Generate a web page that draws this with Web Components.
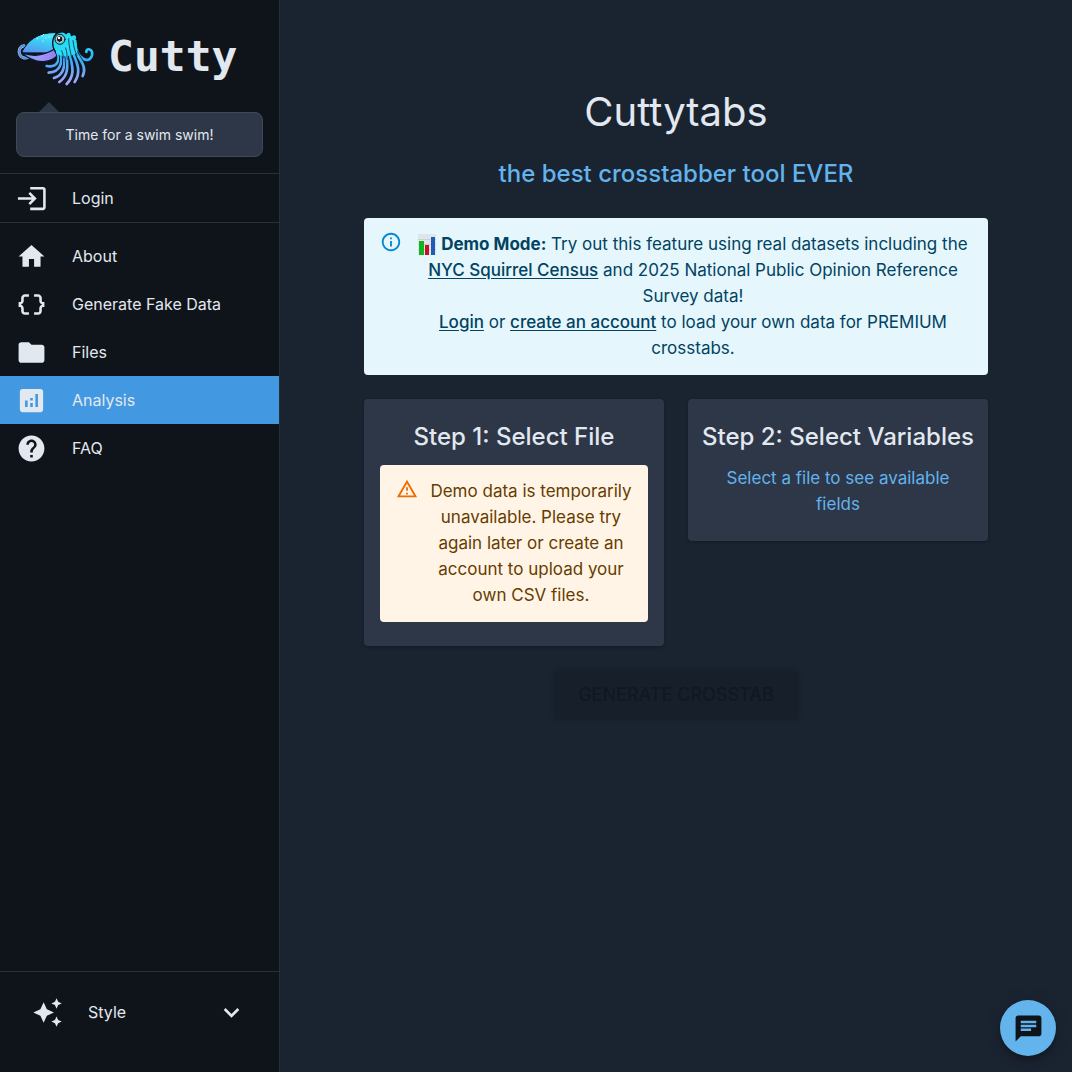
<!DOCTYPE html>
<html lang="en">
<head>
<meta charset="utf-8">
<meta name="viewport" content="width=device-width, initial-scale=1">
<title>Cuttytabs</title>
<style>
  html, body { margin: 0; }
  body { min-height: 100vh; background: #1a2330; color: #e2e8f0; font: 17px/26px Inter, "Liberation Sans", sans-serif; }
</style>
</head>
<body>
<cutty-shell>
  <cutty-brand slot="brand">Cutty</cutty-brand>
  <cutty-bubble slot="brand">Time for a swim swim!</cutty-bubble>

  <nav-item slot="account" icon="login" href="#login">Login</nav-item>

  <nav-item slot="nav" icon="home" href="#about">About</nav-item>
  <nav-item slot="nav" icon="braces" href="#generate">Generate Fake Data</nav-item>
  <nav-item slot="nav" icon="folder" href="#files">Files</nav-item>
  <nav-item slot="nav" icon="chart" href="#analysis" active>Analysis</nav-item>
  <nav-item slot="nav" icon="help" href="#faq">FAQ</nav-item>

  <style-toggle slot="footer">Style</style-toggle>

  <crosstab-page></crosstab-page>
  <chat-button slot="chat"></chat-button>
</cutty-shell>

<script>
const define = (name, html, setup) => {
  const template = document.createElement('template');
  template.innerHTML = '<style>:host,*{box-sizing:border-box}</style>' + html;
  customElements.define(name, class extends HTMLElement {
    constructor() {
      super();
      this.attachShadow({ mode: 'open' }).append(template.content.cloneNode(true));
    }
    connectedCallback() { if (setup) setup(this, this.shadowRoot); }
  });
};

const ICONS = {
  login: '<path d="M21 3.01H11v2h10v14H11v2h10c1.1 0 2-.9 2-2v-14c0-1.1-.9-2-2-2z"/><path d="M11 17l5-5-5-5-1.400 1.400L12.200 11H1.500v2h10.700l-2.600 2.600z"/>',
  home: '<path d="M10 20v-6h4v6h5v-8h3L12 3 2 12h3v8z"/>',
  braces: '<path d="M4 7v2c0 .55-.45 1-1 1H2v4h1c.55 0 1 .45 1 1v2c0 1.650 1.350 3 3 3h3v-2H7c-.55 0-1-.45-1-1v-2c0-1.300-.840-2.420-2-2.830v-.340C5.160 11.420 6 10.300 6 9V7c0-.55.45-1 1-1h3V4H7C5.350 4 4 5.350 4 7zm17 3c-.55 0-1-.45-1-1V7c0-1.650-1.350-3-3-3h-3v2h3c.55 0 1 .45 1 1v2c0 1.300.840 2.420 2 2.830v.340c-1.160.410-2 1.520-2 2.830v2c0 .55-.45 1-1 1h-3v2h3c1.650 0 3-1.350 3-3v-2c0-.55.45-1 1-1h1v-4h-1z"/>',
  folder: '<path d="M10 4H4c-1.100 0-1.990.900-1.990 2L2 18c0 1.100.900 2 2 2h16c1.100 0 2-.9 2-2V8c0-1.100-.9-2-2-2h-8l-2-2z"/>',
  chart: '<path d="M19 3H5c-1.100 0-2 .900-2 2v14c0 1.100.900 2 2 2h14c1.100 0 2-.9 2-2V5c0-1.100-.9-2-2-2zM9 17H7v-5h2v5zm4 0h-2v-3h2v3zm0-5h-2v-2h2v2zm4 5h-2V7h2v10z"/>',
  help: '<path d="M12 2C6.480 2 2 6.480 2 12s4.480 10 10 10 10-4.480 10-10S17.520 2 12 2zm1 17h-2v-2h2v2zm2.070-7.750-.9.920C13.450 12.900 13 13.500 13 15h-2v-.5c0-1.100.450-2.100 1.170-2.830l1.240-1.260c.370-.360.590-.860.590-1.410 0-1.100-.9-2-2-2s-2 .900-2 2H8c0-2.210 1.790-4 4-4s4 1.790 4 4c0 .880-.360 1.680-.930 2.250z"/>',
  sparkle: '<path d="m19 9 1.250-2.750L23 5l-2.750-1.250L19 1l-1.250 2.750L15 5l2.750 1.250L19 9zm-7.500.5L9 4 6.500 9.500 1 12l5.500 2.500L9 20l2.500-5.500L17 12l-5.500-2.500zM19 15l-1.250 2.750L15 19l2.750 1.250L19 23l1.250-2.750L23 19l-2.750-1.250L19 15z"/>',
  chevron: '<path d="M7.410 8.590 12 13.170l4.590-4.580L18 10l-6 6-6-6z"/>',
  info: '<path d="M11 7h2v2h-2zm0 4h2v6h-2zm1-9C6.480 2 2 6.480 2 12s4.480 10 10 10 10-4.480 10-10S17.520 2 12 2zm0 18c-4.410 0-8-3.590-8-8s3.590-8 8-8 8 3.590 8 8-3.590 8-8 8z"/>',
  warning: '<path d="M12 5.990 19.530 19H4.470L12 5.990M12 2 1 21h22L12 2zm1 14h-2v2h2v-2zm0-6h-2v4h2v-4z"/>',
  chat: '<path d="M20 2H4c-1.100 0-1.990.900-1.990 2L2 22l4-4h14c1.100 0 2-.9 2-2V4c0-1.100-.9-2-2-2zM6 9h12v2H6V9zm8 5H6v-2h8v2zm4-6H6V6h12v2z"/>',
};

define('app-icon', `
  <style>
    :host { display: block; flex: none; width: 31px; height: 31px; }
    svg { display: block; width: 100%; height: 100%; fill: currentColor; }
  </style>
  <svg viewBox="0 0 24 24" aria-hidden="true"></svg>
`, (el, root) => { root.querySelector('svg').innerHTML = ICONS[el.getAttribute('name')] || ''; });

define('cutty-shell', `
  <style>
    :host { display: grid; grid-template-columns: 280px 1fr; min-height: 100vh; }
    aside { display: flex; flex-direction: column; background: #0f141a; border-right: 1px solid #252d35; height: 100vh; position: sticky; top: 0; }
    header { padding: 16px; display: flex; flex-direction: column; gap: 16px; }
    section, nav, footer { border-top: 1px solid #2a3037; }
    nav { padding-top: 9px; flex: 1; }
    footer { padding: 16px 16px 36px; }
    main { min-width: 0; }
  </style>
  <aside>
    <header><slot name="brand"></slot></header>
    <section><slot name="account"></slot></section>
    <nav><slot name="nav"></slot></nav>
    <footer><slot name="footer"></slot></footer>
  </aside>
  <main><slot></slot></main>
  <slot name="chat"></slot>
`);

const ARMS = [
  'M182 62C188 112 226 128 234 100C238 80 216 76 217 90',
  'M178 74C190 108 222 130 206 162',
  'M171 78C184 115 206 145 182 180',
  'M129 88C140 112 132 138 98 132',
  'M138 88C148 120 140 150 104 152',
  'M147 86C156 125 154 158 120 168',
  'M164 82C172 125 188 155 158 186',
  'M156 84C160 125 168 158 136 180',
];

define('cutty-brand', `
  <style>
    :host { display: flex; align-items: center; gap: 10px; height: 80px; font: bold 43px/80px "DejaVu Sans Mono", monospace; }
    svg { display: block; flex: none; width: 82px; height: 66px; }
  </style>
  <svg viewBox="6 3 246 198" fill="none" stroke-linecap="round" stroke-linejoin="round" aria-hidden="true">
    <defs>
      <linearGradient id="mantle" gradientUnits="userSpaceOnUse" x1="80" y1="25" x2="66" y2="95"><stop offset="0" stop-color="#4ff0fa"/><stop offset=".5" stop-color="#3ec8f5"/><stop offset="1" stop-color="#5c95ee"/></linearGradient>
      <linearGradient id="belly" x1="0" y1="0" x2="1" y2="0"><stop offset="0" stop-color="#62aef0"/><stop offset=".5" stop-color="#a596fa"/><stop offset="1" stop-color="#8d7cec"/></linearGradient>
      <linearGradient id="arm" gradientUnits="userSpaceOnUse" x1="0" y1="60" x2="0" y2="188"><stop offset="0" stop-color="#22e0f5"/><stop offset=".45" stop-color="#3fa9ef"/><stop offset="1" stop-color="#b7a4f6"/></linearGradient>
    </defs>
    <path d="M30 71C16 74 12 88 18 99c6 11 17 11 26 6" stroke="#a9c4f5" stroke-width="9"/>
    <path d="M30 71C16 74 12 88 18 99c6 11 17 11 26 6" stroke="#4f8de0" stroke-width="5"/>
    <path d="M22 92C40 58 68 30 126 32l4 60z" fill="url(#mantle)" stroke="#06131d" stroke-width="3"/>
    <path d="M24 91c32 16 68 8 98-10l10 18c-20 24-54 24-80 12-12-5-21-11-28-20z" fill="url(#belly)" stroke="#0a1732" stroke-width="4"/>
    ${ARMS.map(d => `<path d="${d}" stroke="#07182b" stroke-width="13"/><path d="${d}" stroke="url(#arm)" stroke-width="8"/>`).join('')}
    <path d="M122 82C110 60 118 34 140 30c10-2 14 2 16 5 9-9 17-3 16 6 12-8 20 2 15 11 2 14 2 26 4 36-8 14-42 20-62 8z" fill="#29daf4"/>
    <path d="M124 90C109 64 116 34 140 30c10-2 14 2 16 5 9-9 17-3 16 6 12-8 20 2 15 11" stroke="#06131d" stroke-width="4"/>
    <path d="M143 86c3 8 5 14 5 22m7-30c4 10 4 22 5 34m4-62c0 22 6 40 9 58m4-52c2 20 6 32 12 44" stroke="#0d4a72" stroke-width="3"/>
    <circle cx="138" cy="52" r="15" fill="#58cfe0" stroke="#08202d" stroke-width="3"/>
    <circle cx="137" cy="51" r="10" fill="#09141b" stroke="#c5c8bf" stroke-width="3"/>
    <circle cx="135" cy="48" r="4" fill="#fff"/>
    <path d="M70 50h1m13-8h1m10 6h1m-9 9h1m17-12h1m-18-7h1" stroke="#d1ffff" stroke-width="3"/>
  </svg>
  <slot></slot>
`);

define('cutty-bubble', `
  <style>
    :host { display: block; position: relative; padding: 9px 16px; border: 1px solid #3f4a56; border-radius: 8px; background: #2d3748; font-size: 14px; line-height: 25px; text-align: center; }
    :host::before { content: ""; position: absolute; left: 22px; top: -11px; border: 10px solid transparent; border-top: 0; border-bottom-color: #2d3748; }
  </style>
  <slot></slot>
`);

define('nav-item', `
  <style>
    :host { display: block; font-size: 16px; line-height: 24px; }
    a { display: flex; align-items: center; gap: 25px; height: 48px; padding: 0 16px; color: #e2e8f0; text-decoration: none; }
    :host([active]) a { background: #4299e1; }
  </style>
  <a><app-icon></app-icon><slot></slot></a>
`, (el, root) => {
  root.querySelector('a').href = el.getAttribute('href');
  root.querySelector('app-icon').replaceWith(Object.assign(document.createElement('div'), { innerHTML: `<app-icon name="${el.getAttribute('icon')}"></app-icon>` }).firstChild);
});

define('style-toggle', `
  <style>
    :host { display: block; }
    button { display: flex; align-items: center; gap: 25px; width: 100%; height: 48px; padding: 0 16px; border: 0; background: none; color: #e2e8f0; font: 16px/24px Inter, "Liberation Sans", sans-serif; text-align: left; }
    span { flex: 1; }
  </style>
  <button type="button" aria-expanded="false"><app-icon name="sparkle"></app-icon><span><slot></slot></span><app-icon name="chevron"></app-icon></button>
`);

define('alert-box', `
  <style>
    :host { display: flex; padding: 13px 16px 14px; border-radius: 4px; background: #e5f6fd; color: #014361; text-align: center; }
    :host([kind=warning]) { background: #fff4e5; color: #663c00; }
    app-icon { width: 22px; height: 22px; margin-right: 12px; color: #0288d1; }
    :host([kind=warning]) app-icon { color: #ed6c02; }
    div { flex: 1; min-width: 0; }
  </style>
  <app-icon name="info"></app-icon><div><slot></slot></div>
`, (el, root) => {
  if (el.getAttribute('kind') === 'warning') {
    const holder = document.createElement('div');
    holder.innerHTML = '<app-icon name="warning"></app-icon>';
    root.querySelector('app-icon').replaceWith(holder.firstChild);
  }
});

define('step-card', `
  <style>
    :host { display: block; padding: 24px 16px; border-radius: 4px; background: #2d3748; box-shadow: 0 1px 3px rgba(0,0,0,.3); text-align: center; }
    h2 { margin: 0 -8px 14px; font-size: 24px; line-height: 28px; font-weight: 500; }
  </style>
  <h2><slot name="title"></slot></h2><slot></slot>
`);

define('bar-chart-glyph', `
  <style>:host { display: inline-block; vertical-align: -5px; } svg { display: block; width: 18px; height: 21px; }</style>
  <svg viewBox="0 0 18 21" role="img" aria-label="Bar chart"><path fill="#dfe5ea" d="M0 0h18v21H0z"/><path stroke="#c8d2da" d="M0 5.500h18M0 10.500h18M0 15.500h18"/><path fill="#12b51d" d="M1 7h5v14H1z"/><path fill="#c51320" d="M7 11h4v10H7z"/><path fill="#1e5cba" d="M13 3h4v18h-4z"/></svg>
`);

define('crosstab-page', `
  <style>
    :host { display: block; max-width: 672px; margin: 0 auto; padding: 86px 24px 24px; text-align: center; }
    h1 { margin: 0 0 16px; font-size: 40px; line-height: 52px; font-weight: 400; }
    .sub { margin: 0 0 24px; font-size: 24px; line-height: 40px; font-weight: 500; color: #63b3ed; }
    alert-box { line-height: 26px; }
    a { color: inherit; font-weight: 500; text-underline-offset: 2px; }
    .steps { display: grid; grid-template-columns: 1fr 1fr; gap: 24px; align-items: start; margin: 24px 0; }
    .hint { margin: 0; padding: 0 16px; color: #63b3ed; }
    .generate { height: 49px; padding: 0 24px; border: 0; border-radius: 4px; background: #171f2b; color: #111823; font: 500 18px/32px Inter, "Liberation Sans", sans-serif; text-transform: uppercase; box-shadow: 0 0 4px #171f2b; }
  </style>
  <h1>Cuttytabs</h1>
  <p class="sub">the best crosstabber tool EVER</p>
  <alert-box kind="info"><bar-chart-glyph></bar-chart-glyph> <strong>Demo Mode:</strong> Try out this feature using real datasets including the <a href="#census">NYC Squirrel Census</a> and 2025 National Public Opinion Reference Survey data!<br><a href="#login">Login</a> or <a href="#signup">create an account</a> to load your own data for PREMIUM crosstabs.</alert-box>
  <div class="steps">
    <step-card><span slot="title">Step 1: Select File</span>
      <alert-box kind="warning">Demo data is temporarily unavailable. Please try again later or create an account to upload your own CSV files.</alert-box>
    </step-card>
    <step-card><span slot="title">Step 2: Select Variables</span>
      <p class="hint">Select a file to see available fields</p>
    </step-card>
  </div>
  <button class="generate" type="button" disabled>Generate Crosstab</button>
`);

define('chat-button', `
  <style>
    :host { display: block; position: fixed; right: 16px; bottom: 16px; }
    button { display: grid; place-items: center; width: 56px; height: 56px; padding: 0; border: 0; border-radius: 50%; background: #63b3ed; color: #0f141a; box-shadow: 0 3px 5px -1px rgba(0,0,0,.2), 0 6px 10px rgba(0,0,0,.14), 0 1px 18px rgba(0,0,0,.12); }
  </style>
  <button type="button" aria-label="Open chat"><app-icon name="chat"></app-icon></button>
`);
</script>
</body>
</html>
